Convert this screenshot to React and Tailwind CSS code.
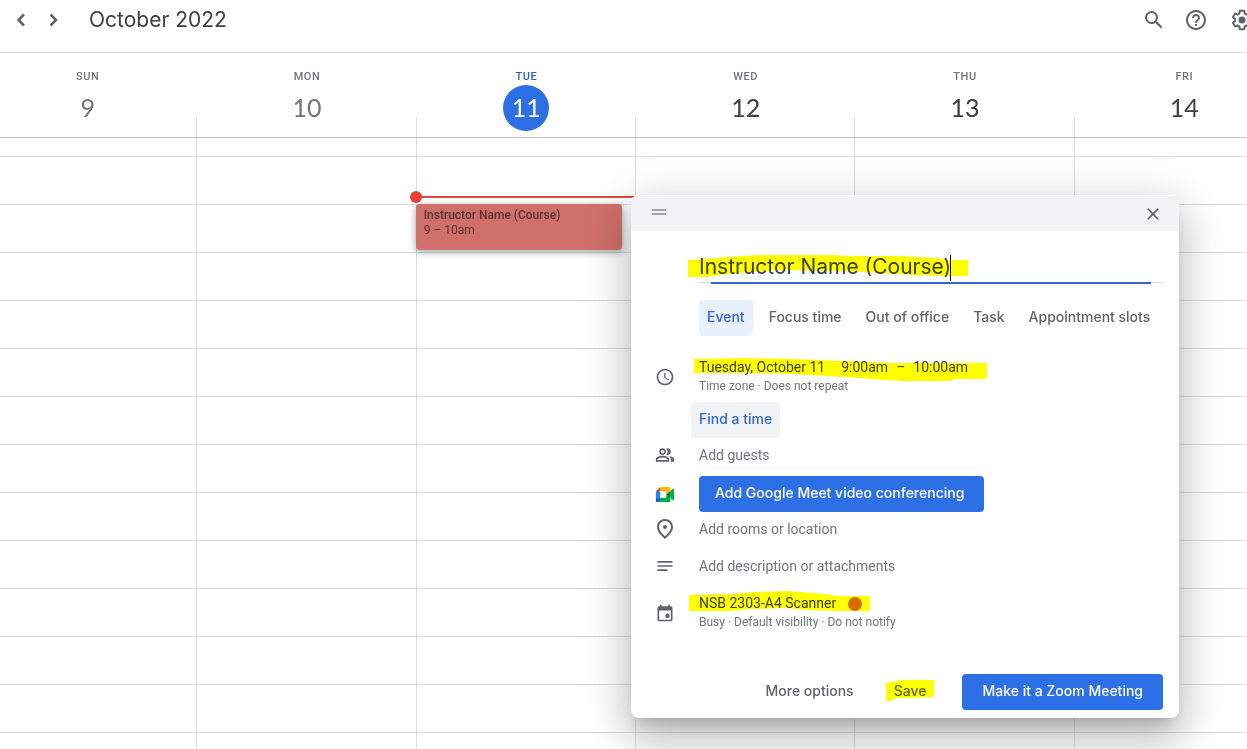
import React, { useState } from "react";
import {
  MdAccessTime,
  MdClose,
  MdHelpOutline,
  MdNotes,
  MdOutlinePeopleAlt,
  MdOutlinePlace,
  MdSearch,
} from "react-icons/md";

const days = [
  { name: "Sun", date: 9, past: true },
  { name: "Mon", date: 10, past: true },
  { name: "Tue", date: 11, today: true },
  { name: "Wed", date: 12 },
  { name: "Thu", date: 13 },
  { name: "Fri", date: 14 },
];

const hours = [9, 10, 11, 12, 13, 14, 15, 16, 17, 18, 19, 20, 21];

const tabs = ["Event", "Focus time", "Out of office", "Task", "Appointment slots"];

function Chevron({ d }) {
  return (
    <svg viewBox="0 0 24 24" className="size-6" fill="none" stroke="currentColor" strokeWidth="2.5" aria-hidden="true">
      <path d={d} />
    </svg>
  );
}

function SettingsIcon() {
  return (
    <svg viewBox="0 0 24 24" className="size-6" fill="currentColor" aria-hidden="true">
      <path d="M13.85 22.25h-3.7c-.74 0-1.36-.54-1.45-1.27l-.27-1.89c-.27-.14-.53-.29-.79-.46l-1.8.72c-.7.26-1.47-.03-1.81-.65L2.2 15.53c-.35-.66-.2-1.44.36-1.88l1.53-1.19c-.01-.15-.02-.3-.02-.46 0-.15.01-.31.02-.46l-1.52-1.19c-.59-.45-.74-1.26-.37-1.88l1.85-3.19c.34-.62 1.11-.9 1.79-.63l1.81.73c.26-.17.52-.32.78-.46l.27-1.91c.09-.7.71-1.25 1.44-1.25h3.7c.74 0 1.36.54 1.45 1.27l.27 1.89c.27.14.53.29.79.46l1.8-.72c.71-.26 1.48.03 1.82.65l1.84 3.18c.36.66.2 1.44-.36 1.88l-1.52 1.19c.01.15.02.3.02.46s-.01.31-.02.46l1.52 1.19c.56.45.72 1.23.37 1.86l-1.86 3.22c-.34.62-1.11.9-1.8.63l-1.8-.72c-.26.17-.52.32-.78.46l-.27 1.91c-.1.68-.72 1.22-1.46 1.22zm-3.23-2h2.76l.37-2.55.53-.22c.44-.18.88-.44 1.34-.78l.45-.34 2.38.96 1.38-2.4-2.03-1.58.07-.56c.03-.26.06-.51.06-.78s-.03-.53-.06-.78l-.07-.56 2.03-1.58-1.39-2.4-2.39.96-.45-.35c-.42-.32-.87-.58-1.33-.77l-.52-.22-.37-2.55h-2.76l-.37 2.55-.53.21c-.44.19-.88.44-1.34.79l-.45.33-2.38-.95-1.39 2.39 2.03 1.58-.07.56a7 7 0 0 0-.06.79c0 .26.02.53.06.78l.07.56-2.03 1.58 1.38 2.4 2.39-.96.45.35c.43.33.86.58 1.33.77l.53.22.38 2.55z" />
      <circle cx="12" cy="12" r="3.5" />
    </svg>
  );
}

function MeetIcon() {
  return (
    <svg viewBox="0 0 87.5 72" className="h-[15px] w-5" aria-hidden="true">
      <path fill="#00832d" d="M49.5 36l8.53 9.75 11.47 7.33 2-17.02-2-16.64-11.69 6.44z" />
      <path fill="#0066da" d="M0 51.5V66c0 3.315 2.685 6 6 6h14.5l3-10.96-3-9.54-9.95-3z" />
      <path fill="#e94235" d="M20.5 0L0 20.5l10.55 3 9.95-3 2.95-9.41z" />
      <path fill="#2684fc" d="M20.5 20.5H0v31h20.5z" />
      <path fill="#00ac47" d="M82.6 8.68L69.5 19.42v33.66l13.16 10.79c1.97 1.54 4.85.135 4.85-2.37V11c0-2.535-2.945-3.925-4.91-2.32zM49.5 36v15.5h-29V72h43c3.315 0 6-2.685 6-6V53.08z" />
      <path fill="#ffba00" d="M63.5 0h-43v20.5h29V36l20-16.57V6c0-3.315-2.685-6-6-6z" />
    </svg>
  );
}

function CalendarIcon() {
  return (
    <svg viewBox="0 0 24 24" className="size-5" fill="currentColor" aria-hidden="true">
      <path d="M19 4h-1V2h-2v2H8V2H6v2H5c-1.1 0-2 .9-2 2v14c0 1.1.9 2 2 2h14c1.1 0 2-.9 2-2V6c0-1.1-.9-2-2-2zm0 16H5V9h14v11z" />
      <circle cx="15" cy="15.5" r="2.6" />
    </svg>
  );
}

// Marker strokes laid over the text they point out
function Marker({ className, width, height, d }) {
  return (
    <svg
      className={`pointer-events-none absolute mix-blend-multiply ${className}`}
      width={width}
      height={height}
      viewBox={`0 0 ${width} ${height}`}
      aria-hidden="true"
    >
      <path fill="#ffff00" d={d} />
    </svg>
  );
}

function TopBar() {
  return (
    <header className="flex h-[53px] items-start justify-between overflow-hidden border-b border-[#dadce0] pt-2 text-[#5f6368]">
      <div className="flex items-center">
        <button aria-label="Previous week" className="ml-[9px]">
          <Chevron d="M15 6.5L9.500 12L15 17.500" />
        </button>
        <button aria-label="Next week" className="ml-2">
          <Chevron d="M9.500 6.500L15 12L9.500 17.500" />
        </button>
        <h1 className="ml-6 font-['Inter',sans-serif] text-[21px] leading-6 text-[#3c4043]">October 2022</h1>
      </div>
      <div className="-mr-[7px] flex items-center gap-[18px]">
        <button aria-label="Search">
          <MdSearch className="size-6" />
        </button>
        <button aria-label="Help" className="mr-1">
          <MdHelpOutline className="size-6" />
        </button>
        <button aria-label="Settings">
          <SettingsIcon />
        </button>
      </div>
    </header>
  );
}

function DayHeader({ day }) {
  let dateStyle = "text-[#3c4043]";
  if (day.past) dateStyle = "text-[#70757a]";
  if (day.today) dateStyle = "bg-[#2d6fe4] text-white";

  return (
    <div className="flex h-[84px]">
      <span className="h-5 w-px self-end bg-[#dadce0]" />
      <div className="flex flex-1 flex-col items-center pt-4 pl-px">
        <span
          className={`text-[11px] leading-4 font-medium tracking-wider uppercase ${day.today ? "text-[#2d5fd0]" : "text-[#70757a]"}`}
        >
          {day.name}
        </span>
        <span
          className={`flex size-[46px] items-center justify-center rounded-full font-['Lato',sans-serif] text-[25px] ${dateStyle}`}
        >
          {day.date}
        </span>
      </div>
    </div>
  );
}

function DayColumn({ day }) {
  return (
    <div className="relative border-l border-[#dadce0]">
      <div className="h-[19px] border-b border-[#dadce0]" />
      {hours.map((hour) => (
        <div key={hour} className="h-12 border-b border-[#dadce0]" />
      ))}
      {day.today && (
        <>
          <div className="absolute top-[58px] right-0 left-0 h-0.5 bg-[#e0493e]" />
          <div className="absolute top-[53px] -left-[7px] size-3 rounded-full bg-[#e94235]" />
          <div className="absolute top-[66px] right-[13px] -left-px h-[46px] rounded bg-[#d0706a] px-2 pt-1 text-xs leading-[15px] text-[#5a3233] shadow-[0_2px_6px_1px_rgba(60,64,67,0.4)]">
            <p className="font-medium">Instructor Name (Course)</p>
            <p>9 – 10am</p>
          </div>
        </>
      )}
    </div>
  );
}

function Row({ icon, className, children }) {
  return (
    <div className={`grid grid-cols-[68px_1fr] items-center ${className}`}>
      <span className="flex justify-center text-[#5f6368]">{icon}</span>
      <div className="relative flex flex-col items-start">{children}</div>
    </div>
  );
}

function EventDialog() {
  const [title, setTitle] = useState("Instructor Name (Course)");
  const [tab, setTab] = useState("Event");

  return (
    <section
      role="dialog"
      aria-label="New event"
      className="absolute top-[195px] right-[68px] w-[548px] overflow-hidden rounded-lg bg-white pb-2 text-sm text-[#70757a] shadow-[0_24px_38px_3px_rgba(0,0,0,0.14),0_9px_46px_8px_rgba(0,0,0,0.12),0_11px_15px_-7px_rgba(0,0,0,0.2)]"
    >
      <div className="flex h-9 items-center justify-between border-t border-white bg-[#f1f3f4] pr-4 pl-[21px]">
        <span className="mb-1 flex w-[14px] flex-col gap-0.5">
          <span className="h-0.5 bg-[#a3a5a8]" />
          <span className="h-0.5 bg-[#a3a5a8]" />
        </span>
        <button aria-label="Close" className="text-[#5f6368]">
          <MdClose className="size-5" />
        </button>
      </div>

      <div className="relative mt-5 mr-4 ml-[68px] border-b border-[#dadce0]">
        <input
          aria-label="Title"
          value={title}
          onChange={(e) => setTitle(e.target.value)}
          className="block h-[31px] w-full font-['Inter',sans-serif] text-[21px] text-[#3c4043] outline-none"
        />
        <span className="absolute right-3 -bottom-0.5 left-3 h-0.5 bg-[#3367d6]" />
        <span className="absolute top-1 left-[251px] h-[26px] w-px bg-black" />
        <Marker
          className="top-[3px] -left-[11px]"
          width={280}
          height={24}
          d="M0 6L18 5L40 3L70 1H146L160 2H210L250 4L258 6H280V22H258L225 21L160 17L90 16L40 20L18 23L0 23Z"
        />
      </div>

      <div className="mt-[17px] ml-[68px] flex gap-2 font-['Inter',sans-serif] font-medium">
        {tabs.map((name) => (
          <button
            key={name}
            onClick={() => setTab(name)}
            className={`h-9 rounded px-2 pb-0.5 whitespace-nowrap ${name === tab ? "bg-[#e8f0fe] text-[#3367d6]" : "text-[#5f6368]"}`}
          >
            {name}
          </button>
        ))}
      </div>

      <Row icon={<MdAccessTime className="size-5" />} className="mt-[22px]">
        <p className="flex leading-[19px] text-[#3c4043]">
          <span>Tuesday, October 11</span>
          <span className="ml-4">9:00am</span>
          <span className="mx-2">–</span>
          <span>10:00am</span>
        </p>
        <p className="text-xs leading-[18px]">Time zone · Does not repeat</p>
        <Marker
          className="top-0 -left-[5px]"
          width={293}
          height={24}
          d="M0 1L50 0L100 1L150 3L200 5H293V21H262L256 23H210L190 22L150 19L100 16L50 15H0Z"
        />
      </Row>
      <button className="mt-[7px] ml-[60px] block h-9 rounded bg-[#f1f3f4] px-2 pb-0.5 font-['Inter',sans-serif] font-medium text-[#3367d6]">
        Find a time
      </button>

      <Row icon={<MdOutlinePeopleAlt className="size-5" />} className="h-[34px]">
        <button>Add guests</button>
      </Row>
      <Row icon={<MeetIcon />} className="mt-1">
        <button className="h-9 rounded bg-[#2d6fe4] pr-5 pb-0.5 pl-4 font-['Inter',sans-serif] font-medium text-white">
          Add Google Meet video conferencing
        </button>
      </Row>
      <Row icon={<MdOutlinePlace className="size-6" />} className="h-[34px]">
        <button>Add rooms or location</button>
      </Row>
      <Row icon={<MdNotes className="size-5" />} className="h-10">
        <button>Add description or attachments</button>
      </Row>

      <Row icon={<CalendarIcon />} className="mt-2">
        <p className="flex items-center leading-[19px] text-[#3c4043]">
          NSB 2303-A4 Scanner
          <span className="ml-3 size-[14px] rounded-full bg-[#d56e0c]" />
        </p>
        <p className="text-xs leading-[18px]">Busy · Default visibility · Do not notify</p>
        <Marker
          className="-top-[3px] -left-[10px]"
          width={181}
          height={21}
          d="M0 4L45 3L65 1L100 0L135 3L150 5H181V20H150L120 19L95 17L60 18L40 20H0Z"
        />
      </Row>

      <div className="mt-[43px] mr-4 flex justify-end font-['Inter',sans-serif] font-medium text-[#5f6368]">
        <button className="h-9 px-4 pb-0.5">More options</button>
        <button className="relative ml-2 h-9 px-4 pb-0.5">
          Save
          <Marker
            className="top-[6px] left-2"
            width={48}
            height={21}
            d="M0 3L12 1L20 0H48V17L24 18L10 18L5 21H0Z"
          />
        </button>
        <button className="ml-5 h-9 rounded bg-[#2d6fe4] px-5 pb-0.5 text-white">Make it a Zoom Meeting</button>
      </div>
    </section>
  );
}

export default function App() {
  return (
    <div className="relative h-screen overflow-hidden bg-white font-['Roboto',sans-serif]">
      <TopBar />
      <main>
        <div className="-mr-[46px] -ml-[23px] grid grid-cols-6 border-b border-[#c0c2c5]">
          {days.map((day) => (
            <DayHeader key={day.name} day={day} />
          ))}
        </div>
        <div className="-mr-[46px] -ml-[23px] grid grid-cols-6">
          {days.map((day) => (
            <DayColumn key={day.name} day={day} />
          ))}
        </div>
      </main>
      <EventDialog />
    </div>
  );
}
